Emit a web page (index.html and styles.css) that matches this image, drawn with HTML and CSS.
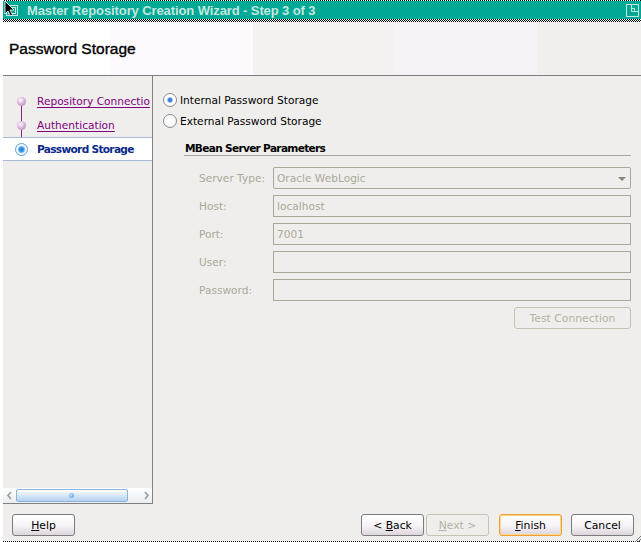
FILE: index.html
```html
<!DOCTYPE html>
<html>
<head>
<meta charset="utf-8">
<link rel="stylesheet" href="styles.css">
</head>
<body>
<div class="window">
  <div class="titlebar">
    <div class="titlebar-inner">
      <span class="app-icon">
        <svg width="16" height="17" viewBox="0 0 16 17">
          <rect x="2.5" y="4.5" width="11" height="10" fill="none" stroke="#c4e6de" stroke-width="1"/>
          <rect x="4.5" y="6.5" width="7" height="6" fill="none" stroke="#c4e6de" stroke-width="1"/>
          <path d="M1 0 V13 L4 10 L6.5 15 L8.5 14 L6 9 H10 Z" fill="#000" stroke="#fff" stroke-width="0.8"/>
        </svg>
      </span>
      <span class="title">Master Repository Creation Wizard - Step 3 of 3</span>
      <span class="max-icon">
        <svg width="13" height="13" viewBox="0 0 13 13">
          <rect x="0.5" y="0.5" width="12" height="12" fill="none" stroke="#c4e6de"/>
          <path d="M5.5 0.5 V7.5 H12.5" fill="none" stroke="#c4e6de"/>
          <path d="M5.5 4.5 H8.5 V7.5" fill="none" stroke="#c4e6de"/>
        </svg>
      </span>
    </div>
  </div>

  <div class="header">
    <h1>Password Storage</h1>
  </div>

  <div class="main">
    <aside class="sidebar">
      <ul class="steps">
        <li class="step done first"><span class="marker"><span class="dot"></span></span><a class="step-link">Repository Connectio</a></li>
        <li class="step done"><span class="marker"><span class="dot"></span></span><a class="step-link">Authentication</a></li>
        <li class="step current"><span class="marker"><span class="dot-current"></span></span><span class="step-current">Password Storage</span></li>
      </ul>
      <div class="hscroll">
        <span class="arrow left">
          <svg width="7" height="9" viewBox="0 0 7 9"><path d="M5 1 L2 4.5 L5 8" fill="none" stroke="#9a9a9a" stroke-width="1.6"/></svg>
        </span>
        <span class="thumb"><span class="grip"></span></span>
        <span class="arrow right">
          <svg width="7" height="9" viewBox="0 0 7 9"><path d="M2 1 L5 4.5 L2 8" fill="none" stroke="#9a9a9a" stroke-width="1.6"/></svg>
        </span>
      </div>
    </aside>

    <section class="content">
      <label class="radio"><span class="radio-circle checked"></span>Internal Password Storage</label>
      <label class="radio"><span class="radio-circle"></span>External Password Storage</label>

      <div class="group">
        <div class="group-title">MBean Server Parameters</div>
        <div class="form">
          <span class="label">Server Type:</span>
          <span class="field select">Oracle WebLogic<span class="caret"></span></span>
          <span class="label">Host:</span>
          <span class="field">localhost</span>
          <span class="label">Port:</span>
          <span class="field">7001</span>
          <span class="label">User:</span>
          <span class="field"></span>
          <span class="label">Password:</span>
          <span class="field"></span>
        </div>
        <div class="test-row">
          <span class="btn disabled test">Test Connection</span>
        </div>
      </div>
    </section>
  </div>

  <div class="footer">
    <span class="btn help"><span><u>H</u>elp</span></span>
    <div class="nav">
      <span class="btn back"><span>&lt; <u>B</u>ack</span></span>
      <span class="btn disabled next"><span><u>N</u>ext &gt;</span></span>
      <span class="btn finish"><span><u>F</u>inish</span></span>
      <span class="btn cancel"><span>Cancel</span></span>
    </div>
  </div>
  <div class="bottom-edge">
    <svg class="grip-corner" width="6" height="6" viewBox="0 0 6 6"><path d="M6 0 L0 6 M6 3 L3 6" stroke="#777" stroke-width="1"/></svg>
  </div>
</div>
</body>
</html>
```

FILE: styles.css
```css
* { box-sizing: border-box; margin: 0; padding: 0; }
html, body { width: 641px; height: 542px; overflow: hidden; background: #fff; }
body {
  font-family: "DejaVu Sans", sans-serif;
  font-size: 10.6px;
  color: #000;
}

.window {
  margin-left: 3px;
  height: 542px;
  display: flex;
  flex-direction: column;
  background: #efeeec;
}

/* title bar */
.titlebar {
  height: 22px;
  padding: 1px 0 3px;
  background: repeating-conic-gradient(#000 0 25%, #fff 0 50%) 0 0 / 2px 2px;
}
.titlebar-inner {
  height: 18px;
  background: #00a996;
  display: flex;
  align-items: center;
  color: #c4e6de;
}
.app-icon { width: 16px; height: 17px; margin-left: 1px; margin-top: -2px; display: flex; }
.title {
  margin-left: 7px;
  font-family: "Liberation Sans", sans-serif;
  font-size: 13px;
  font-weight: bold;
  letter-spacing: -0.1px;
  flex: 1;
}
.max-icon { width: 13px; height: 13px; margin-right: 2px; display: flex; }

/* header */
.header {
  height: 54px;
  border-bottom: 1px solid #7e7e7e;
  background: linear-gradient(90deg,
    #ffffff 0 107px, #fdf9fd 107px 250px, #f3f2f0 250px 391px,
    #f6f3f6 391px 534px, #f0efed 534px);
  display: flex;
  align-items: center;
  padding-left: 6px;
  padding-top: 1px;
}
.header h1 {
  font-family: "Liberation Sans", sans-serif;
  font-size: 15.5px;
  font-weight: normal;
  color: #000;
  -webkit-text-stroke: 0.35px #000;
}

/* main */
.main {
  height: 428px;
  display: flex;
}
.sidebar {
  width: 150px;
  border-right: 1px solid #808080;
  border-bottom: 1px solid #808080;
  display: flex;
  flex-direction: column;
  overflow: hidden;
}
.steps {
  list-style: none;
  flex: 1;
  padding-top: 13px;
}
.step {
  height: 24px;
  display: flex;
  align-items: center;
  white-space: nowrap;
  position: relative;
}
.step.done::after {
  content: "";
  position: absolute;
  left: 18px;
  top: 16px;
  width: 1px;
  height: 24px;
  background: #7a2a7a;
}
.marker {
  width: 31px;
  margin-left: 3px;
  display: flex;
  justify-content: center;
  align-items: center;
  flex: none;
}
.dot {
  width: 9px;
  height: 9px;
  border-radius: 50%;
  background: radial-gradient(circle at 40% 35%, #ffffff 0, #e6c6e6 35%, #b37ab3 90%);
  position: relative;
  z-index: 1;
}
.dot-current {
  width: 13px;
  height: 13px;
  border-radius: 50%;
  border: 1px solid #5aa0e0;
  background: radial-gradient(circle, #1e7fd6 0, #3c96e6 2.2px, #8cc4f0 3.2px, #ffffff 4.2px, #e6f2fc 5.5px);
  position: relative;
  z-index: 1;
}
.step-link {
  color: #800080;
  text-decoration: underline;
  text-underline-offset: 2px;
}
.step.current {
  background: #fff;
  border-top: 1px solid #a6bad6;
  border-bottom: 1px solid #a6bad6;
}
.step-current {
  color: #0a2a8a;
  font-weight: bold;
  letter-spacing: -0.7px;
}

.hscroll {
  height: 15px;
  display: flex;
  align-items: center;
  background: linear-gradient(#ffffff, #e8eef2);
}
.arrow { width: 12px; display: flex; justify-content: center; }
.arrow.left { margin-left: 1px; }
.thumb {
  width: 113px;
  height: 13px;
  border: 1px solid #8ab4dc;
  border-radius: 2px;
  background: linear-gradient(#ffffff, #dbe9f6 45%, #b5d2ee);
  display: flex;
  justify-content: center;
  align-items: center;
}
.grip {
  width: 5px;
  height: 5px;
  border-radius: 50%;
  background: radial-gradient(circle at 40% 40%, #bfe0ff, #3f8ee0);
}
.arrow.right { margin-left: 12px; }

/* content */
.content {
  flex: 1;
  padding: 13px 10px 0 10px;
  display: flex;
  flex-direction: column;
}
.radio {
  height: 21px;
  display: flex;
  align-items: center;
  gap: 3px;
}
.radio-circle {
  width: 14px;
  height: 14px;
  border-radius: 50%;
  border: 1px solid #8a8a8a;
  background: radial-gradient(circle at 50% 40%, #ffffff 40%, #e8e8e8);
}
.radio-circle.checked {
  background: radial-gradient(circle, #2a6fd0 0, #4d8fe0 2px, #ffffff 3.2px, #ffffff 100%);
}

.group {
  margin-left: 21px;
  margin-top: 10px;
}
.group-title {
  height: 15px;
  font-weight: bold;
  letter-spacing: -0.7px;
  padding-left: 1px;
  border-bottom: 1px solid #a4a4a4;
  line-height: 14px;
}
.form {
  margin-top: 11px;
  padding-left: 15px;
  display: grid;
  grid-template-columns: 74px 1fr;
  grid-auto-rows: 22px;
  row-gap: 6px;
  align-items: center;
}
.label { color: #aca899; }
.field {
  height: 22px;
  border: 1px solid #aca899;
  color: #aca899;
  padding-left: 3px;
  display: flex;
  align-items: center;
  position: relative;
}
.field.select { border-radius: 2px; }
.caret {
  position: absolute;
  right: 4px;
  top: 9px;
  width: 0;
  height: 0;
  border-left: 4px solid transparent;
  border-right: 4px solid transparent;
  border-top: 4px solid #8a8678;
}
.test-row {
  margin-top: 6px;
  display: flex;
  justify-content: flex-end;
}

/* buttons */
.btn {
  height: 22px;
  width: 63px;
  display: flex;
  align-items: center;
  justify-content: center;
  border: 1px solid #7c7c7c;
  border-radius: 3px;
  background: linear-gradient(#ffffff, #f6f2f6 55%, #ddd6dd);
  color: #000;
  font-size: 10.8px;
  white-space: pre;
}
.btn.disabled {
  border-color: #c7c3b2;
  background: #efeeec;
  color: #b6b2a4;
}
.btn.test { width: 117px; }
.btn.finish {
  border-color: #f0a030;
  box-shadow: inset 0 0 0 1px #ffd68a;
}

.footer {
  height: 37px;
  display: flex;
  align-items: flex-start;
  justify-content: space-between;
  padding: 10px 7px 0 9px;
}
.nav { display: flex; }
.next { margin-left: 2px; }
.finish { margin-left: 10px; }
.cancel { margin-left: 9px; }

.bottom-edge {
  height: 1px;
  background: repeating-linear-gradient(90deg, #000 0 1px, #fff 1px 2px);
  position: relative;
}
.grip-corner { position: absolute; right: 0; bottom: 0; }
```
